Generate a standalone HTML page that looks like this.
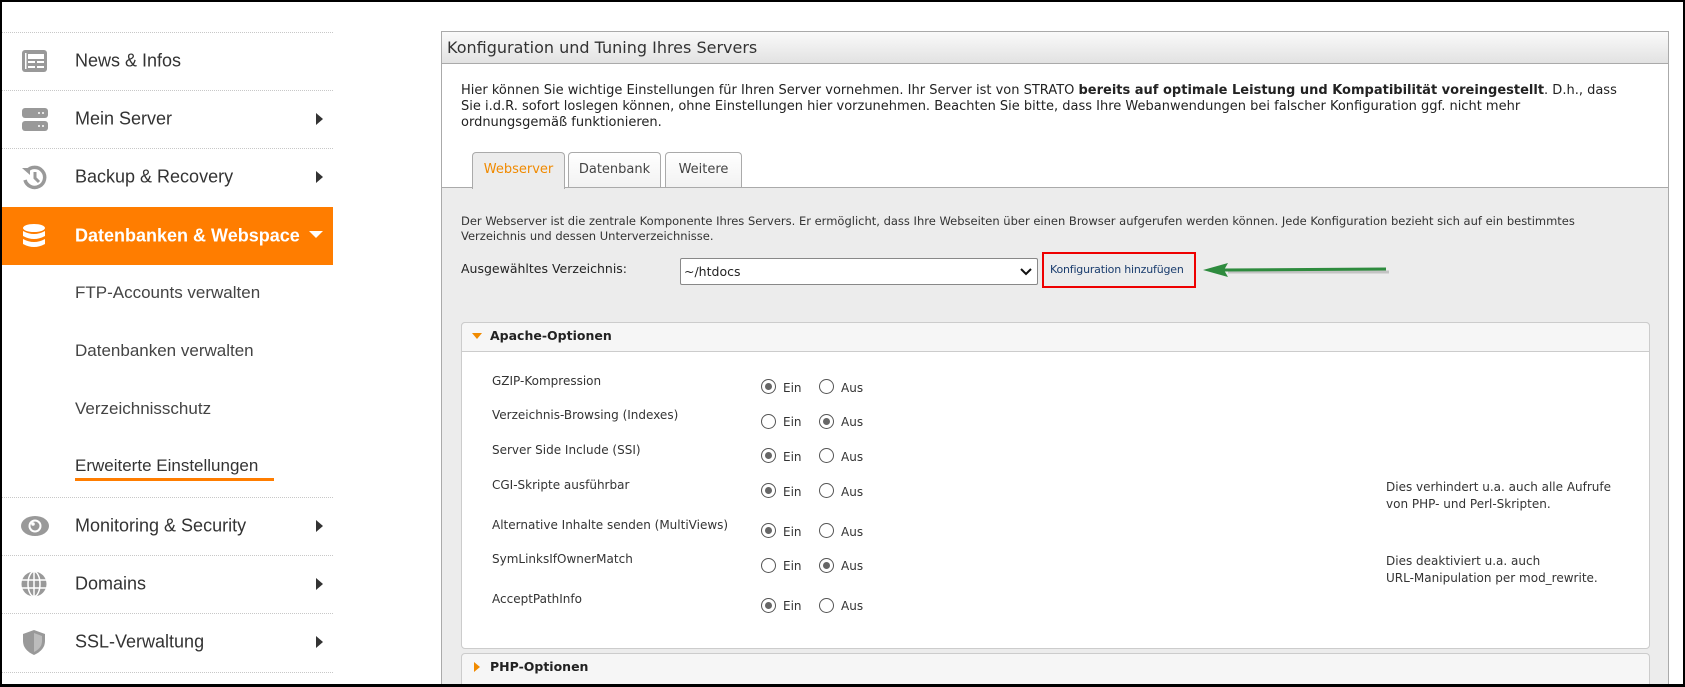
<!DOCTYPE html>
<html><head><meta charset="utf-8"><style>
*{box-sizing:border-box;margin:0;padding:0}
html,body{width:1685px;height:687px;overflow:hidden}
body{background:#fff;position:relative;font-family:"DejaVu Sans","Liberation Sans",sans-serif;color:#333}
.frame{position:absolute;left:0;top:0;width:1685px;height:687px;border:2px solid #000;border-bottom-width:3px;z-index:10;pointer-events:none}
.abs{position:absolute}
.dot{position:absolute;left:2px;width:331px;border-top:1px dotted #c8c8c8}
.nav{position:absolute;left:2px;width:331px;height:58px;font-family:"Liberation Sans",sans-serif;font-size:18px;color:#333;}
.nav span{position:absolute;left:73px;top:50%;transform:translateY(-50%)}
.nav .ar{position:absolute;left:314px;top:50%;margin-top:-6px;width:0;height:0;border-left:7px solid #333;border-top:6px solid transparent;border-bottom:6px solid transparent}
.nav svg{position:absolute;left:18px;top:50%;margin-top:-14px}
.sub{position:absolute;left:75px;font-family:"Liberation Sans",sans-serif;font-size:17px;color:#444}
.t{position:absolute;font-size:12px;color:#333;white-space:nowrap}
.r{position:absolute;width:15px;height:15px;border:1px solid #555;border-radius:50%;background:#fff}
.r.on::after{content:"";position:absolute;left:3px;top:3px;width:7px;height:7px;border-radius:50%;background:#666}
</style></head><body>
<div class="frame"></div>

<div class="dot" style="top:32px"></div>
<div class="nav" style="top:32px"><svg width="28" height="28" viewBox="0 0 28 28"><rect x="2" y="3" width="25" height="22" rx="3" fill="#999"/><rect x="8" y="7" width="16" height="5" fill="#fff"/><rect x="8" y="14" width="7" height="2" fill="#fff"/><rect x="17" y="14" width="7" height="2" fill="#fff"/><rect x="8" y="19" width="7" height="2" fill="#fff"/><rect x="17" y="19" width="7" height="2" fill="#fff"/><rect x="5" y="6" width="1.5" height="16" fill="#fff"/></svg><span>News &amp; Infos</span></div>
<div class="dot" style="top:90px"></div>
<div class="nav" style="top:90px"><svg width="28" height="28" viewBox="0 0 28 28"><rect x="2" y="3" width="26" height="10" rx="3" fill="#999"/><rect x="2" y="16" width="26" height="10" rx="3" fill="#999"/><circle cx="19" cy="8" r="1" fill="#fff"/><circle cx="23" cy="8" r="1" fill="#fff"/><circle cx="19" cy="21" r="1" fill="#fff"/><circle cx="23" cy="21" r="1" fill="#fff"/></svg><span>Mein Server</span><i class="ar"></i></div>
<div class="dot" style="top:148px"></div>
<div class="nav" style="top:148px"><svg width="28" height="28" viewBox="0 0 28 28"><path d="M7 8 A10 10 0 1 1 5 17" fill="none" stroke="#999" stroke-width="3.5"/><path d="M2 5 L10 5 L10 12 Z" fill="#999"/><path d="M15 9 V15 L19 19" fill="none" stroke="#999" stroke-width="3"/></svg><span>Backup &amp; Recovery</span><i class="ar"></i></div>
<div class="nav" style="top:207px;background:#ff7d00;color:#fff;font-weight:bold"><svg width="28" height="28" viewBox="0 0 28 28"><ellipse cx="14" cy="6" rx="11" ry="4" fill="#fff"/><path d="M3 9 Q14 15 25 9 V14 Q14 20 3 14Z" fill="#fff"/><path d="M3 17 Q14 23 25 17 V22 Q14 28 3 22Z" fill="#fff"/></svg><span>Datenbanken &amp; Webspace</span><i style="position:absolute;left:307px;top:24px;border-top:7px solid #fff;border-left:7px solid transparent;border-right:7px solid transparent"></i></div>
<div class="sub" style="top:283px">FTP-Accounts verwalten</div>
<div class="sub" style="top:341px">Datenbanken verwalten</div>
<div class="sub" style="top:399px">Verzeichnisschutz</div>
<div class="sub" style="top:456px;color:#333">Erweiterte Einstellungen</div>
<div class="abs" style="left:75px;top:478px;width:199px;height:3px;background:#ff7d00"></div>
<div class="dot" style="top:497px"></div>
<div class="nav" style="top:497px"><svg width="30" height="28" viewBox="0 0 30 28"><ellipse cx="15" cy="14" rx="14" ry="10" fill="#999"/><circle cx="15" cy="14" r="6.5" fill="#fff"/><circle cx="15" cy="14" r="4.5" fill="#999"/><circle cx="13" cy="12" r="1.8" fill="#fff"/></svg><span>Monitoring &amp; Security</span><i class="ar"></i></div>
<div class="dot" style="top:555px"></div>
<div class="nav" style="top:555px"><svg width="28" height="28" viewBox="0 0 28 28"><circle cx="14" cy="14" r="12.5" fill="#999"/><path d="M1.5 10H26.5M1.5 18H26.5M14 1.5V26.5" stroke="#fff" stroke-width="1.5"/><ellipse cx="14" cy="14" rx="6" ry="12.5" fill="none" stroke="#fff" stroke-width="1.5"/></svg><span>Domains</span><i class="ar"></i></div>
<div class="dot" style="top:613px"></div>
<div class="nav" style="top:613px"><svg width="28" height="28" viewBox="0 0 28 28"><path d="M14 2 L25 6 V13 Q25 22 14 27 Q3 22 3 13 V6Z" fill="#999"/><path d="M14 5 L22 8 V13 Q22 20 14 24Z" fill="#fff" opacity=".35"/></svg><span>SSL-Verwaltung</span><i class="ar"></i></div>
<div class="dot" style="top:672px"></div>

<!-- panel -->
<div class="abs" style="left:441px;top:31px;width:1228px;height:654px;border:1px solid #aaa;border-bottom:none;background:#fff;overflow:hidden"></div>
<div class="abs" style="left:442px;top:32px;width:1226px;height:32px;background:linear-gradient(#fafafa,#e2e2e2);border-bottom:1px solid #aaa"></div>
<div class="t" style="left:447px;top:38px;font-size:16px;color:#333">Konfiguration und Tuning Ihres Servers</div>
<div class="t" style="left:461px;top:83px;font-size:13px;line-height:16px;color:#222">Hier können Sie wichtige Einstellungen für Ihren Server vornehmen. Ihr Server ist von STRATO <b>bereits auf optimale Leistung und Kompatibilität voreingestellt</b>. D.h., dass<br>Sie i.d.R. sofort loslegen können, ohne Einstellungen hier vorzunehmen. Beachten Sie bitte, dass Ihre Webanwendungen bei falscher Konfiguration ggf. nicht mehr<br>ordnungsgemäß funktionieren.</div>
<div class="abs" style="left:442px;top:187px;width:1226px;height:498px;background:#ececec;border-top:1px solid #aaa"></div>
<div class="abs" style="left:472px;top:152px;width:93px;height:37px;background:#ececec;border:1px solid #aaa;border-bottom:none;border-radius:4px 4px 0 0"></div>
<div class="t" style="left:472px;width:93px;text-align:center;top:162px;font-size:13px;color:#f08a00">Webserver</div>
<div class="abs" style="left:568px;top:152px;width:93px;height:35px;background:linear-gradient(#fff,#f2f2f2);border:1px solid #aaa;border-bottom:none;border-radius:4px 4px 0 0"></div>
<div class="t" style="left:568px;width:93px;text-align:center;top:162px;font-size:13px;color:#444">Datenbank</div>
<div class="abs" style="left:665px;top:152px;width:77px;height:35px;background:linear-gradient(#fff,#f2f2f2);border:1px solid #aaa;border-bottom:none;border-radius:4px 4px 0 0"></div>
<div class="t" style="left:665px;width:77px;text-align:center;top:162px;font-size:13px;color:#444">Weitere</div>

<div class="t" style="left:461px;top:214px;line-height:15px;font-size:11.5px">Der Webserver ist die zentrale Komponente Ihres Servers. Er ermöglicht, dass Ihre Webseiten über einen Browser aufgerufen werden können. Jede Konfiguration bezieht sich auf ein bestimmtes<br>Verzeichnis und dessen Unterverzeichnisse.</div>
<div class="t" style="left:461px;top:261px;font-size:12.5px;color:#222">Ausgewähltes Verzeichnis:</div>
<div class="abs" style="left:680px;top:258px;width:358px;height:27px;background:#fff;border:1px solid #888;border-radius:2px"></div>
<div class="t" style="left:684px;top:264px;font-size:12.5px;color:#222">~/htdocs</div>
<svg class="abs" style="left:1020px;top:267px" width="12" height="9" viewBox="0 0 12 9"><path d="M1 2 L6 7 L11 2" fill="none" stroke="#111" stroke-width="2"/></svg>
<div class="abs" style="left:1042px;top:252px;width:154px;height:36px;border:2px solid #e00"></div>
<div class="t" style="left:1050px;top:263px;font-size:11px;letter-spacing:-0.2px;color:#1a3d6e">Konfiguration hinzufügen</div>
<svg class="abs" style="left:1200px;top:260px" width="195" height="22" viewBox="0 0 195 22"><path d="M26 10 L187 10" stroke="#888" stroke-width="3" opacity=".4" transform="translate(2,2)"/><path d="M24 10 L186 9" stroke="#2e8b3e" stroke-width="3"/><path d="M3 10 L28 3 L24 10 L28 17Z" fill="#2e8b3e"/></svg>

<div class="abs" style="left:461px;top:322px;width:1189px;height:327px;background:#fff;border:1px solid #ccc;border-radius:4px"></div>
<div class="abs" style="left:461px;top:322px;width:1189px;height:30px;background:#f6f6f6;border:1px solid #ccc;border-radius:4px 4px 0 0"></div>
<i class="abs" style="left:472px;top:333px;border-top:6px solid #f08a00;border-left:5px solid transparent;border-right:5px solid transparent"></i>
<div class="t" style="left:490px;top:328px;font-size:12.5px;font-weight:bold;color:#222">Apache-Optionen</div>

<div class="t" style="left:492px;top:374px">GZIP-Kompression</div>
<div class="r on" style="left:761px;top:379px"></div><div class="t" style="left:783px;top:381px">Ein</div>
<div class="r" style="left:819px;top:379px"></div><div class="t" style="left:841px;top:381px">Aus</div>

<div class="t" style="left:492px;top:408px">Verzeichnis-Browsing (Indexes)</div>
<div class="r" style="left:761px;top:414px"></div><div class="t" style="left:783px;top:415px">Ein</div>
<div class="r on" style="left:819px;top:414px"></div><div class="t" style="left:841px;top:415px">Aus</div>

<div class="t" style="left:492px;top:443px">Server Side Include (SSI)</div>
<div class="r on" style="left:761px;top:448px"></div><div class="t" style="left:783px;top:450px">Ein</div>
<div class="r" style="left:819px;top:448px"></div><div class="t" style="left:841px;top:450px">Aus</div>

<div class="t" style="left:492px;top:478px">CGI-Skripte ausführbar</div>
<div class="r on" style="left:761px;top:483px"></div><div class="t" style="left:783px;top:485px">Ein</div>
<div class="r" style="left:819px;top:483px"></div><div class="t" style="left:841px;top:485px">Aus</div>
<div class="t" style="left:1386px;top:479px;line-height:17px">Dies verhindert u.a. auch alle Aufrufe<br>von PHP- und Perl-Skripten.</div>

<div class="t" style="left:492px;top:518px">Alternative Inhalte senden (MultiViews)</div>
<div class="r on" style="left:761px;top:523px"></div><div class="t" style="left:783px;top:525px">Ein</div>
<div class="r" style="left:819px;top:523px"></div><div class="t" style="left:841px;top:525px">Aus</div>

<div class="t" style="left:492px;top:552px">SymLinksIfOwnerMatch</div>
<div class="r" style="left:761px;top:558px"></div><div class="t" style="left:783px;top:559px">Ein</div>
<div class="r on" style="left:819px;top:558px"></div><div class="t" style="left:841px;top:559px">Aus</div>
<div class="t" style="left:1386px;top:553px;line-height:17px">Dies deaktiviert u.a. auch<br>URL-Manipulation per mod_rewrite.</div>

<div class="t" style="left:492px;top:592px">AcceptPathInfo</div>
<div class="r on" style="left:761px;top:598px"></div><div class="t" style="left:783px;top:599px">Ein</div>
<div class="r" style="left:819px;top:598px"></div><div class="t" style="left:841px;top:599px">Aus</div>

<div class="abs" style="left:461px;top:653px;width:1189px;height:32px;background:#f6f6f6;border:1px solid #ccc;border-bottom:none;border-radius:4px 4px 0 0"></div>
<i class="abs" style="left:474px;top:662px;border-left:6px solid #f08a00;border-top:5px solid transparent;border-bottom:5px solid transparent"></i>
<div class="t" style="left:490px;top:659px;font-size:12.5px;font-weight:bold;color:#222">PHP-Optionen</div>
</body></html>
